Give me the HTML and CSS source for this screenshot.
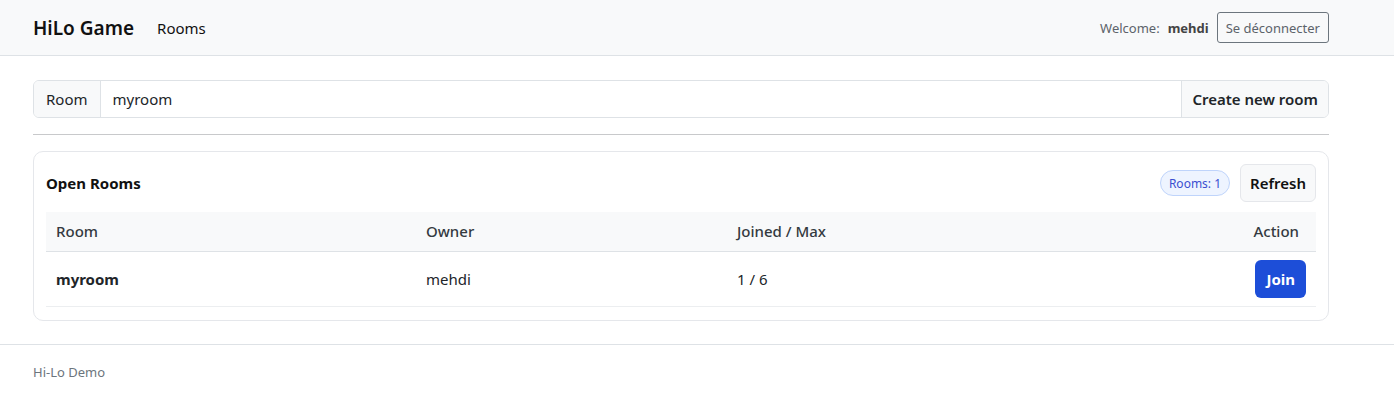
FILE: index.html
```html
<!DOCTYPE html>
<html lang="en">
<head>
<meta charset="utf-8">
<title>HiLo Game</title>
<link rel="stylesheet" href="styles.css">
</head>
<body>
<header class="navbar">
  <div class="wrap nav-inner">
    <div class="nav-left">
      <span class="brand">HiLo Game</span>
      <span class="nav-link">Rooms</span>
    </div>
    <div class="nav-right">
      <span class="welcome">Welcome:</span>
      <span class="user">mehdi</span>
      <button class="btn-outline">Se déconnecter</button>
    </div>
  </div>
</header>
<main class="wrap main">
  <div class="input-group">
    <span class="addon">Room</span>
    <input class="field" type="text" value="myroom">
    <button class="btn-create">Create new room</button>
  </div>
  <hr class="sep">
  <section class="card">
    <div class="card-head">
      <span class="card-title">Open Rooms</span>
      <div class="card-tools">
        <span class="badge">Rooms: 1</span>
        <button class="btn-refresh">Refresh</button>
      </div>
    </div>
    <table class="rooms">
      <thead>
        <tr>
          <th class="c-room">Room</th>
          <th class="c-owner">Owner</th>
          <th class="c-joined">Joined / Max</th>
          <th class="c-action">Action</th>
        </tr>
      </thead>
      <tbody>
        <tr>
          <td class="c-room strong">myroom</td>
          <td class="c-owner">mehdi</td>
          <td class="c-joined">1 / 6</td>
          <td class="c-action"><button class="btn-join">Join</button></td>
        </tr>
      </tbody>
    </table>
  </section>
</main>
<footer class="footer">
  <div class="wrap">Hi-Lo Demo</div>
</footer>
</body>
</html>
```
FILE: styles.css
```css
* { box-sizing: border-box; }
body {
  margin: 0;
  font-family: "Noto Sans", "Open Sans", sans-serif;
  color: #212529;
  background: #fff;
  font-size: 15px;
}
.wrap {
  width: 1296px;
  margin-left: 33px;
}
.navbar {
  background: #f8f9fa;
  border-bottom: 1px solid #dee2e6;
  height: 56px;
}
.nav-inner {
  height: 55px;
  display: flex;
  align-items: center;
  justify-content: space-between;
}
.nav-left { display: flex; align-items: center; gap: 23px; }
.brand { font-size: 19px; font-weight: 600; color: #111; }
.nav-link { font-size: 15px; color: #111; }
.nav-right { display: flex; align-items: center; }
.welcome { font-size: 13px; color: #5c636a; margin-right: 8px; }
.user { font-size: 13px; font-weight: 700; color: #444; margin-right: 8px; }
.btn-outline {
  font-family: inherit;
  font-size: 13px;
  color: #5c636a;
  background: transparent;
  border: 1px solid #6c757d;
  border-radius: 3px;
  height: 31px;
  padding: 0 8px;
}
.main { padding-top: 24px; }
.input-group {
  display: flex;
  height: 38px;
  border: 1px solid #dee2e6;
  border-radius: 6px;
  overflow: hidden;
}
.addon {
  background: #f8f9fa;
  border-right: 1px solid #dee2e6;
  padding: 0 12px;
  display: flex;
  align-items: center;
  font-size: 15px;
  color: #212529;
}
.field {
  flex: 1;
  border: 0;
  font-family: inherit;
  font-size: 15px;
  padding: 0 12px;
  color: #212529;
  outline: none;
}
.btn-create {
  font-family: inherit;
  font-size: 15px;
  font-weight: 600;
  color: #212529;
  background: #f8f9fa;
  border: 0;
  border-left: 1px solid #dee2e6;
  padding: 0 10px;
}
.sep {
  margin: 16px 0 16px;
  border: 0;
  border-top: 1px solid #c8c9cb;
}
.card {
  border: 1px solid #e5e7eb;
  border-radius: 10px;
  padding: 12px 12px 13px;
}
.card-head {
  display: flex;
  justify-content: space-between;
  align-items: center;
  height: 38px;
  margin-bottom: 10px;
}
.card-title { font-size: 15px; font-weight: 700; color: #111; }
.card-tools { display: flex; align-items: center; gap: 10px; }
.badge {
  font-size: 12px;
  color: #3b4fd0;
  background: #eef4ff;
  border: 1px solid #bfd4fb;
  border-radius: 13px;
  height: 26px;
  padding: 0 8px;
  display: flex;
  align-items: center;
}
.btn-refresh {
  font-family: inherit;
  font-size: 15px;
  font-weight: 600;
  color: #111;
  background: #f8f9fa;
  border: 1px solid #e5e7eb;
  border-radius: 6px;
  height: 38px;
  padding: 0 9px;
}
.rooms {
  width: 100%;
  border-collapse: collapse;
}
.rooms th {
  background: #f8f9fa;
  font-weight: 500;
  color: #343a40;
  text-align: left;
  height: 39px;
  padding: 0 10px;
  border-bottom: 1px solid #dee2e6;
  font-size: 15px;
}
.rooms td {
  height: 55px;
  padding: 0 10px;
  border-bottom: 1px solid #eceef0;
  font-size: 15px;
  color: #212529;
}
.c-room { width: 370px; }
.c-owner { width: 311px; }
.rooms .c-action { text-align: right; }
.rooms th.c-action { padding-right: 17px; }
.strong { font-weight: 700; }
.btn-join {
  font-family: inherit;
  font-size: 15px;
  font-weight: 700;
  color: #fff;
  background: #1d4ed8;
  border: 0;
  border-radius: 6px;
  height: 38px;
  padding: 0 11px;
}
.footer {
  margin-top: 23px;
  border-top: 1px solid #dee2e6;
  padding-top: 18px;
  font-size: 13px;
  color: #6c757d;
}
```
